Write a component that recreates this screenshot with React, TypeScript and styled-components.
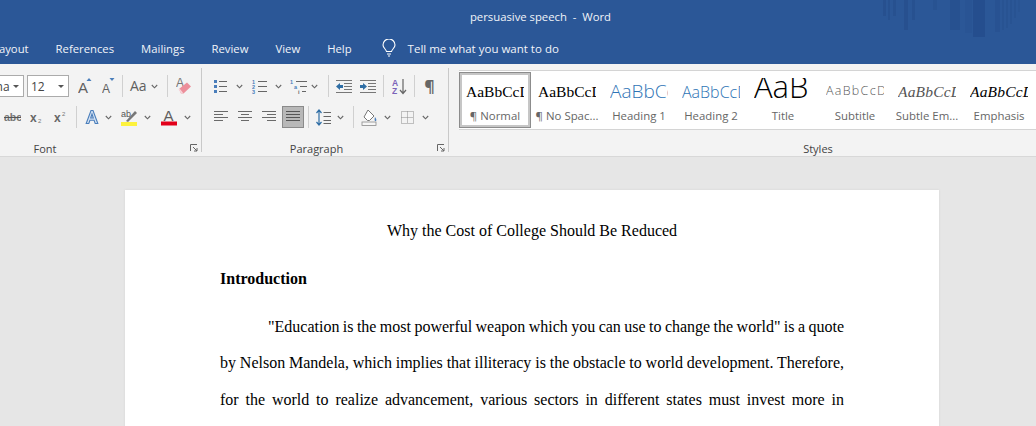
import React from "react";
import styled, { createGlobalStyle } from "styled-components";

const Global = createGlobalStyle`
  html, body { margin: 0; padding: 0; overflow: hidden; background: #e6e6e6; }
  #root { width: 1036px; height: 426px; overflow: hidden; }
  svg { display: block; flex-shrink: 0; }
`;

const UI = `"Open Sans", "Noto Sans", sans-serif`;
const GREY = "#5f5f5f";
const BLUE = "#4a7ebb";

const Shell = styled.div`
  width: 1036px; height: 426px; display: flex; flex-direction: column;
  overflow: hidden; background: #e6e6e6; font-family: ${UI};
`;
const Head = styled.header`
  position: relative; height: 64px; flex: none; background: #2b5797; color: #fff;
  display: flex; flex-direction: column;
`;
const Watermark = styled.svg`position: absolute; top: 0; right: 0;`;
const TitleBar = styled.div`
  height: 32px; display: flex; align-items: center; justify-content: center;
  font-size: 11.3px; padding-left: 45px; color: #f1f4f9; white-space: pre;
`;
const TabRow = styled.nav`
  height: 32px; display: flex; align-items: center; gap: 27px; margin-left: -7px;
  font-size: 11.3px; color: #f1f4f9;
`;
const TellMe = styled.div`display: flex; align-items: center; gap: 12px; margin-left: 3px; font-size: 11.5px;`;

const Ribbon = styled.section`
  height: 92px; flex: none; display: flex; background: #f3f3f3;
  border-bottom: 1px solid #d8d8d8; box-sizing: content-box;
`;
const Group = styled.div<{ $w: number }>`
  width: ${(p) => p.$w}px; flex: none; height: 92px; position: relative;
  display: flex; flex-direction: column; box-sizing: border-box; padding-top: 10px;
`;
const Divider = styled.div`width: 1px; height: 84px; margin: 4px 1px 0 1px; flex: none; background: #c9c9c9;`;
const Row = styled.div`height: 24px; display: flex; align-items: center; margin-bottom: 7px;`;
const GroupLabel = styled.div<{ $l: number; $r: number }>`
  position: absolute; left: ${(p) => p.$l}px; right: ${(p) => p.$r}px; bottom: -1px; text-align: center;
  font-size: 11px; line-height: 16px; color: #444;
`;
const Launcher = styled.svg`position: absolute; right: 2px; bottom: 4px;`;
const Tool = styled.span<{ $ml: number }>`margin-left: ${(p) => p.$ml}px; display: flex; flex: none;`;
const Sep = styled.span<{ $ml: number }>`margin-left: ${(p) => p.$ml}px; width: 1px; height: 22px; background: #d0d0d0; flex: none;`;
const Combo = styled.div<{ $w: number; $ml: number }>`
  width: ${(p) => p.$w}px; margin-left: ${(p) => p.$ml}px; height: 22px; flex: none;
  box-sizing: border-box; background: #fff; border: 1px solid #ababab;
  display: flex; align-items: center; justify-content: space-between;
  padding: 0 4px 0 3px; font-size: 12px; color: #444;
`;
const Caret = styled.i`
  width: 0; height: 0; border-left: 3px solid transparent; border-right: 3px solid transparent;
  border-top: 3px solid #555;
`;
const CaseText = styled.span`font-size: 14px; font-weight: 400; color: ${GREY}; line-height: 16px; width: 16px;`;
const Pilcrow = styled.span`font-size: 16px; font-weight: 700; line-height: 20px; color: #666; width: 11px; text-align: center;`;
const Pressed = styled.span`
  margin-left: 6px; width: 22px; height: 22px; box-sizing: border-box; flex: none;
  background: #b8b8b8; border: 1px solid #8a8a8a; display: flex; align-items: center; justify-content: center;
`;

const Gallery = styled.div`
  margin: -4px 0 0 9px; width: 577px; height: 60px; box-sizing: border-box; flex: none;
  background: #fff; border-top: 1px solid #d4d4d4; border-bottom: 1px solid #d4d4d4;
  display: flex; overflow: hidden; padding-top: 1px;
`;
const StyleItem = styled.div<{ $on?: boolean }>`
  width: 72px; height: 56px; flex: none; box-sizing: border-box; position: relative;
  display: flex; flex-direction: column; align-items: center;
  border: ${(p) => (p.$on ? "1px solid #8c8c8c" : "1px solid transparent")};
  box-shadow: ${(p) => (p.$on ? "inset 0 0 0 2px #c6c6c6" : "none")};
`;
const Sample = styled.div`
  width: 58px; height: 35px; overflow: hidden; display: flex; align-items: center;
  white-space: nowrap; flex: none; margin-top: 1px;
`;
const TitleSample = styled(Sample)`height: 31px; margin-top: 5px;`;
const SerifSample = styled.span<{ $it?: boolean; $c?: string }>`
  font-family: "Liberation Serif", serif; font-size: 15.5px; color: ${(p) => p.$c || "#000"};
  font-style: ${(p) => (p.$it ? "italic" : "normal")};
  letter-spacing: ${(p) => (p.$it ? "0.2px" : "0")};
`;
const SansSample = styled.span<{ $s: number; $c: string; $sp?: number; $up?: number }>`
  font-family: "Open Sans", sans-serif; font-size: ${(p) => p.$s}px; color: ${(p) => p.$c};
  letter-spacing: ${(p) => p.$sp || 0}px; font-weight: 300;
  margin-top: ${(p) => p.$up || 0}px; line-height: 1;
`;
const StyleName = styled.div`font-size: 11.4px; line-height: 16px; color: #666; white-space: nowrap; margin-top: -1px;`;

const Canvas = styled.main`flex: 1; display: flex; padding: 33px 0 0 125px;`;
const Sheet = styled.article`
  width: 814px; height: 400px; flex: none; background: #fff; box-sizing: border-box;
  padding: 23px 95px 0; font-family: "Liberation Serif", serif; font-size: 16px;
  line-height: 36.4px; color: #000; box-shadow: 0 0 2px #d4d4d4;
`;
const DocTitle = styled.h1`font: inherit; margin: 0 0 11.6px; text-align: center;`;
const DocHead = styled.h2`font: inherit; font-weight: 700; margin: 0 0 11.6px;`;
const Para = styled.p`margin: 0; text-indent: 48px; text-align: justify; word-spacing: -0.8px;`;

const Chev = () => (
  <svg width="7" height="5" viewBox="0 0 7 5"><path d="M.8 1 3.5 3.8 6.2 1" fill="none" stroke="#666" strokeWidth="1.1" /></svg>
);
const Lines = ({ w, rows, c = "#6a6a6a" }: { w: number; rows: [number, number][]; c?: string }) => (
  <svg width={w} height="14" viewBox={`0 0 ${w} 14`}>
    {rows.map(([a, b], i) => <rect key={i} x={a} y={1 + i * 3} width={b - a} height="1" fill={c} />)}
  </svg>
);
const txt = { fontFamily: "Liberation Sans, sans-serif" };
const Grow = () => (
  <svg width="14" height="18" viewBox="0 0 14 18"><text x="0" y="16" fontSize="15" fill={GREY} style={txt}>A</text><path d="M8.5 4 11 1l2.5 3z" fill={BLUE} /></svg>
);
const Shrink = () => (
  <svg width="13" height="18" viewBox="0 0 13 18"><text x="0" y="16" fontSize="12" fill={GREY} style={txt}>A</text><path d="M7.5 1h5l-2.5 3z" fill={BLUE} /></svg>
);
const Eraser = () => (
  <svg width="16" height="20" viewBox="0 0 16 20"><text x="0" y="11" fontSize="12" fill="#777" style={txt}>A</text>
    <path d="M3 13 11 6.5l4 4-7.5 7H5z" fill="#ec8f9b" /><path d="M3 13l3.5 4.5" stroke="#f8d5da" strokeWidth="1.5" /></svg>
);
const Strike = () => (
  <svg width="17" height="12" viewBox="0 0 17 12"><text x="0" y="10" fontSize="10.5" fontWeight="700" fill="#777" style={txt}>abc</text><rect x="0" y="6" width="17" height="1" fill="#555" /></svg>
);
const Script = ({ sup }: { sup?: boolean }) => (
  <svg width="13" height="14" viewBox="0 0 13 14"><text x="0" y="12" fontSize="12" fontWeight="700" fill="#666" style={txt}>x</text>
    <text x="8" y={sup ? 6 : 13} fontSize="6" fill="#777" style={txt}>2</text></svg>
);
const Effect = () => (
  <svg width="14" height="16" viewBox="0 0 14 16"><path d="M1.2 14.5 6 1.5h2l4.8 13h-2.6l-1.1-3.2H4.9l-1.1 3.2zM5.7 9h2.6L7 5z" fill="#d6e3f3" stroke={BLUE} strokeWidth="1.1" /></svg>
);
const Highlight = () => (
  <svg width="17" height="18" viewBox="0 0 17 18"><text x="0" y="9" fontSize="9" fill="#555" style={txt}>ab</text>
    <path d="M5 13 14 3l2 2-9 9z" fill="#777" /><rect x="0" y="14" width="16" height="4" fill="#fdf23c" /></svg>
);
const FontColor = () => (
  <svg width="16" height="18" viewBox="0 0 16 18"><text x="2.5" y="13" fontSize="15" fill={GREY} style={txt}>A</text><rect x="0" y="13.5" width="16" height="4" fill="#e2001a" /></svg>
);
const Bullets = () => (
  <svg width="13" height="15" viewBox="0 0 13 15">
    {[1, 6, 11].map((y) => <g key={y}><rect x="0" y={y} width="3" height="3" fill={BLUE} /><rect x="5" y={y + 1} width="8" height="1" fill="#666" /></g>)}
  </svg>
);
const Numbers = () => (
  <svg width="15" height="15" viewBox="0 0 15 15">
    {["1", "2", "3"].map((n, i) => <g key={n}><text x="0" y={5 + i * 5} fontSize="5.5" fontWeight="700" fill={BLUE} style={txt}>{n}</text><rect x="6" y={2 + i * 5} width="9" height="1" fill="#666" /></g>)}
  </svg>
);
const Multi = () => (
  <svg width="17" height="15" viewBox="0 0 17 15">
    <text x="0" y="5" fontSize="5.5" fontWeight="700" fill={BLUE} style={txt}>1</text><rect x="6" y="2" width="11" height="1" fill="#666" />
    <text x="4" y="10" fontSize="5.5" fontWeight="700" fill={BLUE} style={txt}>a</text><rect x="10" y="7" width="7" height="1" fill="#666" />
    <text x="8" y="15" fontSize="5.5" fontWeight="700" fill="#666" style={txt}>i</text><rect x="12" y="12" width="4" height="1" fill="#666" />
  </svg>
);
const Indent = ({ out }: { out?: boolean }) => (
  <svg width="16" height="13" viewBox="0 0 16 13">
    {[0, 3, 6, 9, 12].map((y) => <rect key={y} x={y >= 3 && y <= 9 ? 8 : 0} y={y} width={y >= 3 && y <= 9 ? 8 : 16} height="1" fill="#777" />)}
    <path d={out ? "M0 6.5 4 3v2h3v3H4v2z" : "M7 6.5 3 3v2H0v3h3v2z"} fill="#2f6ea5" />
  </svg>
);
const Sort = () => (
  <svg width="15" height="17" viewBox="0 0 15 17">
    <text x="0" y="8" fontSize="8.5" fontWeight="700" fill="#7a63b8" style={txt}>A</text>
    <text x="0" y="16" fontSize="8.5" fontWeight="700" fill="#7a63b8" style={txt}>Z</text>
    <path d="M11 1v14M8 12l3 3.5 3-3.5" fill="none" stroke="#666" strokeWidth="1.2" />
  </svg>
);
const Spacing = () => (
  <svg width="15" height="17" viewBox="0 0 15 17">
    <path d="M3 1v15M.5 4 3 1l2.5 3M.5 13 3 16l2.5-3" fill="none" stroke="#2f6ea5" strokeWidth="1.2" />
    {[3, 7, 11, 14].map((y) => <rect key={y} x="7.5" y={y} width="7.5" height="1" fill="#666" />)}
  </svg>
);
const Shade = () => (
  <svg width="17" height="17" viewBox="0 0 17 17">
    <path d="M7 1l6 6-4.5 4.5h-2L3 8z" fill="#fff" stroke="#777" />
    <path d="M14 8c1.3 2 1.8 3 1 4-1 .6-2-.5-1-4z" fill={BLUE} />
    <rect x="1" y="13" width="14" height="3.5" fill="#f6f6f6" stroke="#8a8a8a" strokeWidth=".8" />
  </svg>
);
const Borders = () => (
  <svg width="13" height="13" viewBox="0 0 13 13" fill="none" stroke="#8a8a8a" strokeDasharray="1 1">
    <path d="M.5.5h12v12H.5zM6.5.5v12M.5 6.5h12" />
  </svg>
);
const LaunchIcon = () => (
  <Launcher width="8" height="8" viewBox="0 0 8 8" fill="none" stroke="#666">
    <path d="M.5 7V.5H7" /><path d="M3 3l4 4M4 7h3V4" />
  </Launcher>
);
const Bulb = () => (
  <svg width="14" height="18" viewBox="0 0 14 18" fill="none" stroke="#fff" strokeWidth="1.1">
    <path d="M4.5 12.5C4 10 1 9 1 6a6 6 0 0 1 12 0c0 3-3 4-3.5 6.5zM5 15h4M6 17h2" />
  </svg>
);

const BARS: [number, number, number, number][] = [
  [83, 3, 16, .35], [88, 2, 20, .3], [93, 3, 16, .3], [104, 4, 30, .35], [112, 3, 20, .3],
  [133, 4, 10, .2], [150, 10, 30, .3], [165, 7, 33, .12], [173, 12, 37, .45],
  [195, 5, 32, .25], [202, 2, 30, .2], [206, 2, 28, .2], [210, 2, 24, .2], [214, 2, 18, .2], [218, 2, 12, .15],
];

const STYLES = [
  { name: "¶ Normal", on: true, s: <Sample><SerifSample>AaBbCcDd</SerifSample></Sample> },
  { name: "¶ No Spac...", s: <Sample><SerifSample>AaBbCcDd</SerifSample></Sample> },
  { name: "Heading 1", s: <Sample><SansSample $s={19} $c="#2e74b5">AaBbCcDd</SansSample></Sample> },
  { name: "Heading 2", s: <Sample><SansSample $s={16} $c="#2e74b5">AaBbCcDd</SansSample></Sample> },
  { name: "Title", s: <TitleSample><SansSample $s={31} $c="#000" $up={-15}>AaB</SansSample></TitleSample> },
  { name: "Subtitle", s: <Sample><SansSample $s={12.5} $c="#595959" $sp={1.3}>AaBbCcDd</SansSample></Sample> },
  { name: "Subtle Em...", s: <Sample><SerifSample $it $c="#555">AaBbCcDd</SerifSample></Sample> },
  { name: "Emphasis", s: <Sample><SerifSample $it>AaBbCcDd</SerifSample></Sample> },
];

export default function App() {
  return (
    <Shell>
      <Global />
      <Head>
        <Watermark width="236" height="40" viewBox="0 0 236 40">
          {BARS.map(([x, w, h, o]) => <rect key={x} x={x} y="0" width={w} height={h} fill="#1f4582" opacity={o} />)}
        </Watermark>
        <TitleBar>{"persuasive speech  -  Word"}</TitleBar>
        <TabRow>
          <span>Layout</span><span>References</span><span>Mailings</span><span>Review</span><span>View</span><span>Help</span>
          <TellMe><Bulb /><span>Tell me what you want to do</span></TellMe>
        </TabRow>
      </Head>
      <Ribbon>
        <Group $w={200}>
          <Row>
            <Combo $w={64} $ml={-40}><span>Tahoma</span><Caret /></Combo>
            <Combo $w={42} $ml={3}><span>12</span><Caret /></Combo>
            <Tool $ml={9}><Grow /></Tool>
            <Tool $ml={10}><Shrink /></Tool>
            <Sep $ml={7} />
            <Tool $ml={7}><CaseText>Aa</CaseText></Tool>
            <Tool $ml={5}><Chev /></Tool>
            <Sep $ml={9} />
            <Tool $ml={8}><Eraser /></Tool>
          </Row>
          <Row>
            <Tool $ml={4}><Strike /></Tool>
            <Tool $ml={9}><Script /></Tool>
            <Tool $ml={11}><Script sup /></Tool>
            <Sep $ml={9} />
            <Tool $ml={8}><Effect /></Tool>
            <Tool $ml={6}><Chev /></Tool>
            <Tool $ml={9}><Highlight /></Tool>
            <Tool $ml={6}><Chev /></Tool>
            <Tool $ml={10}><FontColor /></Tool>
            <Tool $ml={7}><Chev /></Tool>
          </Row>
          <GroupLabel $l={0} $r={110}>Font</GroupLabel>
          <LaunchIcon />
        </Group>
        <Divider />
        <Group $w={244}>
          <Row>
            <Tool $ml={11}><Bullets /></Tool>
            <Tool $ml={9}><Chev /></Tool>
            <Tool $ml={9}><Numbers /></Tool>
            <Tool $ml={8}><Chev /></Tool>
            <Tool $ml={8}><Multi /></Tool>
            <Tool $ml={4}><Chev /></Tool>
            <Sep $ml={10} />
            <Tool $ml={7}><Indent out /></Tool>
            <Tool $ml={8}><Indent /></Tool>
            <Sep $ml={7} />
            <Tool $ml={8}><Sort /></Tool>
            <Sep $ml={7} />
            <Tool $ml={9}><Pilcrow>¶</Pilcrow></Tool>
          </Row>
          <Row>
            <Tool $ml={11}><Lines w={14} rows={[[0, 14], [0, 9], [0, 14], [0, 9]]} /></Tool>
            <Tool $ml={10}><Lines w={14} rows={[[0, 14], [3, 11], [0, 14], [3, 11]]} /></Tool>
            <Tool $ml={10}><Lines w={14} rows={[[0, 14], [5, 14], [0, 14], [5, 14]]} /></Tool>
            <Pressed><Lines w={14} rows={[[0, 14], [0, 14], [0, 14], [0, 14]]} c="#555" /></Pressed>
            <Sep $ml={4} />
            <Tool $ml={7}><Spacing /></Tool>
            <Tool $ml={6}><Chev /></Tool>
            <Sep $ml={9} />
            <Tool $ml={7}><Shade /></Tool>
            <Tool $ml={6}><Chev /></Tool>
            <Tool $ml={10}><Borders /></Tool>
            <Tool $ml={8}><Chev /></Tool>
          </Row>
          <GroupLabel $l={0} $r={17}>Paragraph</GroupLabel>
          <LaunchIcon />
        </Group>
        <Divider />
        <Group $w={586}>
          <Gallery>
            {STYLES.map((st) => (
              <StyleItem key={st.name} $on={st.on}>
                {st.s}
                <StyleName>{st.name}</StyleName>
              </StyleItem>
            ))}
          </Gallery>
          <GroupLabel $l={150} $r={0}>Styles</GroupLabel>
        </Group>
      </Ribbon>
      <Canvas>
        <Sheet>
          <DocTitle>Why the Cost of College Should Be Reduced</DocTitle>
          <DocHead>Introduction</DocHead>
          <Para>
            "Education is the most powerful weapon which you can use to change the world" is a quote by Nelson Mandela, which implies that illiteracy is the obstacle to world development. Therefore, for the world to realize advancement, various sectors in different states must invest more in education and make sure that learning stays within the reach of all students.
          </Para>
        </Sheet>
      </Canvas>
    </Shell>
  );
}
